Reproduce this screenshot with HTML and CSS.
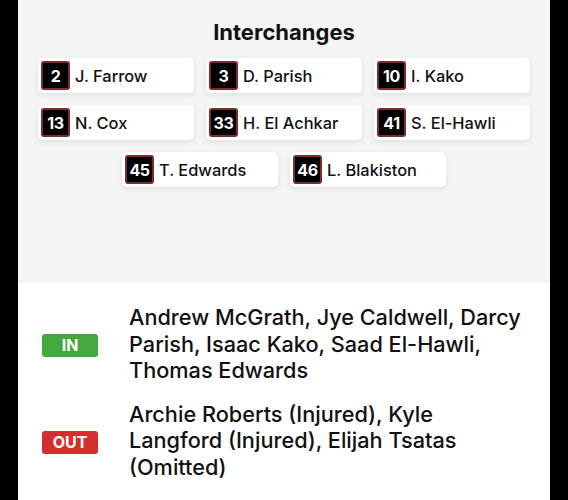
FILE: index.html
```html
<!DOCTYPE html>
<html lang="en">
<head>
    <meta charset="UTF-8">
    <meta name="viewport" content="width=device-width, initial-scale=1.0">
    <title>Team Changes</title>
    <link rel="stylesheet" href="styles.css">
</head>
<body>
    <div class="page">
        <div class="interchanges">
            <h2 class="section-title">Interchanges</h2>
            <div class="player-list">
                <div class="player-card"><span class="jumper">2</span><span class="player-name">J. Farrow</span></div>
                <div class="player-card"><span class="jumper">3</span><span class="player-name">D. Parish</span></div>
                <div class="player-card"><span class="jumper">10</span><span class="player-name">I. Kako</span></div>
                <div class="player-card"><span class="jumper">13</span><span class="player-name">N. Cox</span></div>
                <div class="player-card"><span class="jumper">33</span><span class="player-name">H. El Achkar</span></div>
                <div class="player-card"><span class="jumper">41</span><span class="player-name">S. El-Hawli</span></div>
                <div class="player-card"><span class="jumper">45</span><span class="player-name">T. Edwards</span></div>
                <div class="player-card"><span class="jumper">46</span><span class="player-name">L. Blakiston</span></div>
            </div>
        </div>

        <div class="changes">
            <div class="change-row">
                <div class="change-tag"><span class="tag tag-in">IN</span></div>
                <div class="change-players">Andrew McGrath, Jye Caldwell, Darcy Parish, Isaac Kako, Saad El-Hawli, Thomas Edwards</div>
            </div>
            <div class="change-row">
                <div class="change-tag"><span class="tag tag-out">OUT</span></div>
                <div class="change-players">Archie Roberts (Injured), Kyle Langford (Injured), Elijah Tsatas (Omitted)</div>
            </div>
        </div>
    </div>
</body>
</html>
```

FILE: styles.css
```css
body {
    margin: 0;
    background-color: black;
    font-family: Inter, "Noto Sans", Arial, sans-serif;
    color: #111;
}

.page {
    width: 532px;
    margin: 0 auto;
    min-height: 500px;
    background-color: white;
}

/* bench players */
.interchanges {
    background-color: #f5f5f5;
    padding: 18px 20px 0;
    height: 265px;
}

.section-title {
    margin: 0 0 12px;
    text-align: center;
    font-size: 22px;
    line-height: 28px;
    font-weight: 700;
}

.player-list {
    display: flex;
    flex-wrap: wrap;
    justify-content: center;
    gap: 12px;
}

.player-card {
    width: 156px;
    box-sizing: border-box;
    display: flex;
    align-items: center;
    gap: 5px;
    padding: 3px;
    background-color: white;
    border-radius: 5px;
    box-shadow: 0 2px 6px rgba(0, 0, 0, 0.09);
}

.jumper {
    width: 29px;
    height: 29px;
    box-sizing: border-box;
    display: flex;
    align-items: center;
    justify-content: center;
    background-color: black;
    border: 2px solid #7d2b31;
    border-radius: 3px;
    color: white;
    font-size: 16px;
    font-weight: 700;
    letter-spacing: -0.4px;
}

.player-name {
    font-size: 16.4px;
    font-weight: 500;
}

/* ins and outs */
.changes {
    padding: 21px 0;
}

.change-row {
    display: flex;
    align-items: center;
    margin-bottom: 17px;
}

.change-tag {
    width: 111px;
    padding: 4px 0 0 24px;
    box-sizing: border-box;
    flex-shrink: 0;
}

.tag {
    display: block;
    width: 56px;
    height: 23px;
    line-height: 23px;
    text-align: center;
    border-radius: 3px;
    color: white;
    font-size: 16px;
    font-weight: 700;
}

.tag-in {
    background-color: #45a83e;
}

.tag-out {
    background-color: #d42f2f;
}

.change-players {
    width: 396px;
    font-size: 21.7px;
    line-height: 26.5px;
    font-weight: 500;
}
```
